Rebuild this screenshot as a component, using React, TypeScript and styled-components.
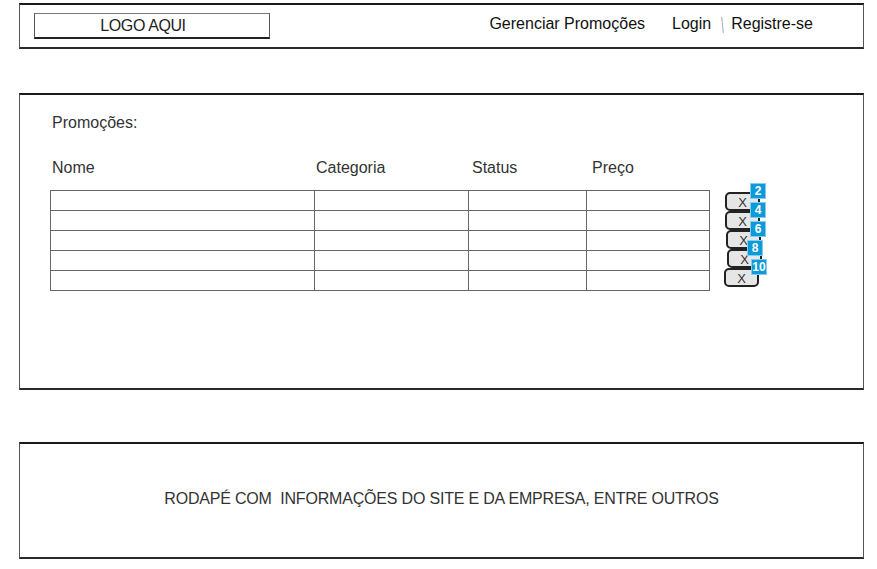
import React from "react";
import styled, { createGlobalStyle } from "styled-components";

const Global = createGlobalStyle`
  html, body { margin: 0; padding: 0; background: #fff; }
  body { font-family: "Liberation Sans", Arial, sans-serif; color: #222; }
`;

const Page = styled.div`
  width: 877px;
  height: 569px;
  box-sizing: border-box;
  padding: 3px 13px 0 19px;
  display: flex;
  flex-direction: column;
  overflow: hidden;
`;

const SketchBox = styled.div<{ $h: number; $mt?: number }>`
  box-sizing: border-box;
  height: ${(p) => p.$h}px;
  margin-top: ${(p) => p.$mt ?? 0}px;
  border-top: 2px solid #1a1a1a;
  border-bottom: 2px solid #2a2a2a;
  border-left: 1px solid #555;
  border-right: 1px solid #555;
  width: 845px;
`;

const Header = styled(SketchBox)`
  display: flex;
  align-items: center;
  padding: 0 50px 0 14px;
`;

const LogoBox = styled.div`
  width: 236px;
  height: 26px;
  box-sizing: border-box;
  border: 1px solid #555;
  border-top: 1.5px solid #777;
  border-bottom: 2px solid #222;
  display: flex;
  align-items: center;
  justify-content: center;
  font-size: 16px;
  letter-spacing: -0.4px;
  color: #222;
  padding: 1px 18px 0 0;
`;

const Nav = styled.nav`
  margin-left: auto;
  display: flex;
  align-items: center;
  font-size: 16px;
  color: #111;
  margin-top: -5px;
`;

const NavLink = styled.span<{ $ml?: number }>`
  margin-left: ${(p) => p.$ml ?? 0}px;
  color: #111;
`;

const NavSep = styled.span`
  display: inline-block;
  width: 1px;
  height: 16px;
  background: #aaa;
  margin: 2px 8px 0 11px;
  transform: rotate(-6deg);
`;

const Main = styled(SketchBox)`
  padding: 19px 0 0 30px;
`;

const Title = styled.div`
  font-size: 16px;
  color: #333;
  padding-left: 2px;
  line-height: 18px;
`;

const HeadRow = styled.div`
  display: grid;
  grid-template-columns: 264px 156px 120px auto;
  padding-left: 2px;
  margin-top: 27px;
  font-size: 16px;
  color: #333;
  line-height: 18px;
`;

const TableArea = styled.div`
  display: flex;
  align-items: flex-start;
  margin-top: 13px;
`;

const Table = styled.div`
  display: grid;
  grid-template-columns: 264px 154px 118px 123px;
  width: 660px;
  box-sizing: border-box;
  border-top: 1px solid #666;
  border-left: 1px solid #666;
`;

const Cell = styled.div`
  height: 20px;
  box-sizing: border-box;
  border-right: 1px solid #666;
  border-bottom: 1px solid #666;
`;

const Buttons = styled.div`
  display: flex;
  flex-direction: column;
  margin-left: 14px;
  margin-top: 2px;
`;

const XButton = styled.div<{ $dx: number }>`
  position: relative;
  width: 35px;
  height: 19px;
  box-sizing: border-box;
  margin-left: ${(p) => p.$dx}px;
  background: #e6e6e6;
  border: 2px solid #222;
  border-radius: 5px;
  font-size: 13px;
  color: #333;
  display: flex;
  align-items: center;
  justify-content: center;
  padding-top: 1px;
`;

const Badge = styled.span<{ $dx: number }>`
  position: absolute;
  top: -11px;
  left: ${(p) => 23 + p.$dx}px;
  z-index: 1;
  width: 16px;
  height: 16px;
  box-sizing: border-box;
  background: #0d9ad8;
  border: 1px solid #7fcdf0;
  color: #fff;
  font-weight: bold;
  font-size: 12px;
  display: flex;
  align-items: center;
  justify-content: center;
  font-family: "Liberation Sans", Arial, sans-serif;
`;

const Footer = styled(SketchBox)`
  display: flex;
  align-items: center;
  justify-content: center;
  font-size: 16px;
  color: #333;
  letter-spacing: -0.19px;
  white-space: pre;
  padding-bottom: 4px;
`;

const buttons = [
  { dx: 1, badge: "2", bdx: 0 },
  { dx: 1, badge: "4", bdx: 0 },
  { dx: 2, badge: "6", bdx: -1 },
  { dx: 3, badge: "8", bdx: -5 },
  { dx: 0, badge: "10", bdx: 2 },
];

export default function App() {
  return (
    <>
      <Global />
      <Page>
        <Header $h={46}>
          <LogoBox>LOGO AQUI</LogoBox>
          <Nav>
            <NavLink>Gerenciar Promoções</NavLink>
            <NavLink $ml={27}>Login</NavLink>
            <NavSep />
            <NavLink>Registre-se</NavLink>
          </Nav>
        </Header>
        <Main $h={297} $mt={44}>
          <Title>Promoções:</Title>
          <HeadRow>
            <span>Nome</span>
            <span>Categoria</span>
            <span>Status</span>
            <span>Preço</span>
          </HeadRow>
          <TableArea>
            <Table>
              {Array.from({ length: 20 }).map((_, i) => (
                <Cell key={i} />
              ))}
            </Table>
            <Buttons>
              {buttons.map((b) => (
                <XButton key={b.badge} $dx={b.dx}>
                  X
                  <Badge $dx={b.bdx}>{b.badge}</Badge>
                </XButton>
              ))}
            </Buttons>
          </TableArea>
        </Main>
        <Footer $h={117} $mt={52}>
          {"RODAPÉ COM  INFORMAÇÕES DO SITE E DA EMPRESA, ENTRE OUTROS"}
        </Footer>
      </Page>
    </>
  );
}
